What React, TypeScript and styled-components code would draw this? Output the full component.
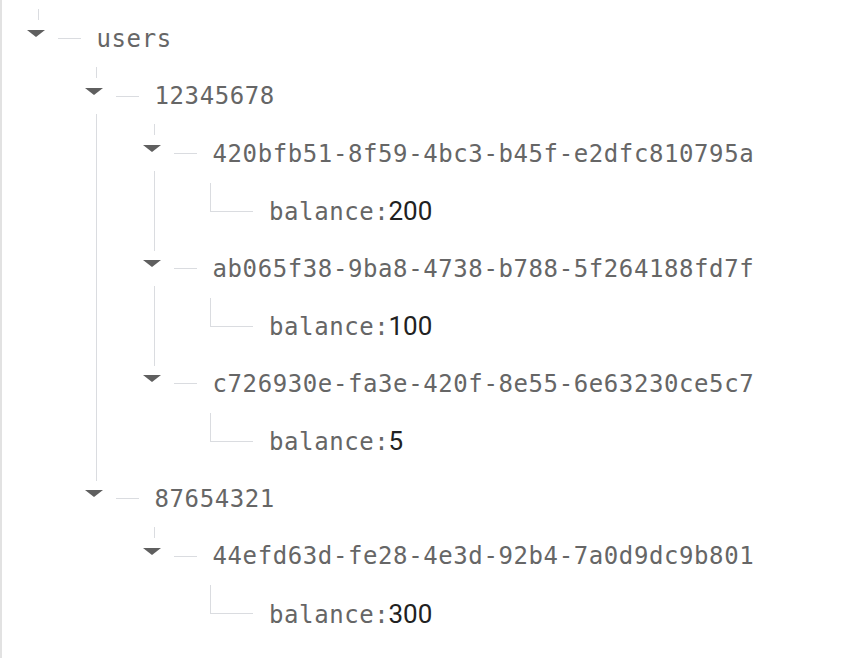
import React from "react";
import styled, { createGlobalStyle, css } from "styled-components";

const ROW = 57.5;
const INDENT = 58;
const LINE = "#dadce0";

const Global = createGlobalStyle`
  html, body { margin: 0; padding: 0; background: #ffffff; }
  #root { width: 850px; height: 658px; overflow: hidden; }
`;

const Page = styled.div`
  box-sizing: border-box;
  width: 850px;
  height: 658px;
  border-left: 2px solid #e2e2e2;
  padding: 10px 0 0 25px;
  background: #ffffff;
`;

const NodeWrap = styled.div<{ $first: boolean; $last: boolean }>`
  position: relative;
  ${(p) =>
    !p.$last &&
    css`
      &::before {
        content: "";
        position: absolute;
        left: 11px;
        width: 1px;
        top: ${ROW / 2 + 17.5}px;
        bottom: ${-(ROW / 2 - 18)}px;
        background: ${LINE};
      }
    `}
  ${(p) =>
    p.$first &&
    css`
      &::after {
        content: "";
        position: absolute;
        left: 11px;
        width: 1px;
        top: ${ROW / 2 - 29.5}px;
        height: 11px;
        background: ${LINE};
      }
    `}
`;

const Row = styled.div`
  display: flex;
  align-items: center;
  height: ${ROW}px;
  white-space: nowrap;
`;

const Children = styled.div`
  margin-left: ${INDENT}px;
`;

const Caret = styled.span`
  flex: none;
  width: 0;
  height: 0;
  border-left: 9px solid transparent;
  border-right: 9px solid transparent;
  border-top: 7px solid #5f5f5f;
  margin-bottom: 10px;
`;

const Dash = styled.span`
  flex: none;
  width: 23px;
  height: 1px;
  background: ${LINE};
  margin: 0 15.5px 0 13px;
`;

const Corner = styled.span`
  flex: none;
  align-self: flex-start;
  box-sizing: border-box;
  width: 43px;
  height: 29px;
  margin: 0 16px 0 9px;
  border-left: 1px solid ${LINE};
  border-bottom: 1px solid ${LINE};
`;

const Label = styled.span`
  display: flex;
  align-items: baseline;
`;

const Key = styled.span`
  font-family: "DejaVu Sans Mono", "Liberation Mono", monospace;
  font-size: 24px;
  letter-spacing: 0.6px;
  color: #666666;
`;

const Value = styled.span`
  font-family: Roboto, "Noto Sans", sans-serif;
  font-size: 26px;
  color: #212121;
  margin-left: -1px;
`;

type TreeNode = { key: string; value?: string; children?: TreeNode[] };

const data: TreeNode[] = [
  {
    key: "users",
    children: [
      {
        key: "12345678",
        children: [
          {
            key: "420bfb51-8f59-4bc3-b45f-e2dfc810795a",
            children: [{ key: "balance", value: "200" }],
          },
          {
            key: "ab065f38-9ba8-4738-b788-5f264188fd7f",
            children: [{ key: "balance", value: "100" }],
          },
          {
            key: "c726930e-fa3e-420f-8e55-6e63230ce5c7",
            children: [{ key: "balance", value: "5" }],
          },
        ],
      },
      {
        key: "87654321",
        children: [
          {
            key: "44efd63d-fe28-4e3d-92b4-7a0d9dc9b801",
            children: [{ key: "balance", value: "300" }],
          },
        ],
      },
    ],
  },
];

function Node({ node, first, last }: { node: TreeNode; first: boolean; last: boolean }) {
  const isLeaf = !node.children;
  if (isLeaf) {
    return (
      <NodeWrap $first={false} $last={last}>
        <Row>
          <Corner />
          <Label>
            <Key>{node.key}:</Key>
            <Value>{node.value}</Value>
          </Label>
        </Row>
      </NodeWrap>
    );
  }
  return (
    <NodeWrap $first={first} $last={last}>
      <Row>
        <Caret />
        <Dash />
        <Label>
          <Key>{node.key}</Key>
        </Label>
      </Row>
      <Children>
        <NodeList nodes={node.children!} />
      </Children>
    </NodeWrap>
  );
}

function NodeList({ nodes }: { nodes: TreeNode[] }) {
  return (
    <>
      {nodes.map((n, i) => (
        <Node key={n.key + i} node={n} first={i === 0} last={i === nodes.length - 1} />
      ))}
    </>
  );
}

export default function App() {
  return (
    <>
      <Global />
      <Page>
        <NodeList nodes={data} />
      </Page>
    </>
  );
}
